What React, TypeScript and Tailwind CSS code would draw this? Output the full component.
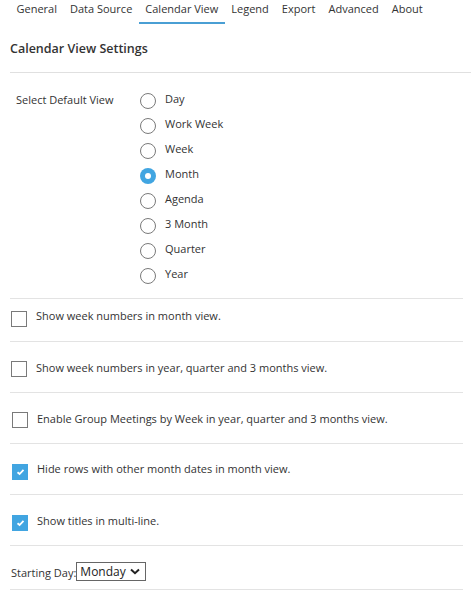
import React from "react";

const tabs = ["General", "Data Source", "Calendar View", "Legend", "Export", "Advanced", "About"];
const views = ["Day", "Work Week", "Week", "Month", "Agenda", "3 Month", "Quarter", "Year"];

function Radio({ checked }: { checked?: boolean }) {
  return checked ? (
    <span className="w-4 h-4 rounded-full bg-[#41a5e1] flex items-center justify-center shrink-0">
      <span className="w-[6px] h-[6px] rounded-full bg-white" />
    </span>
  ) : (
    <span className="w-4 h-4 rounded-full border border-[#7a7a7a] bg-white shrink-0" />
  );
}

function Check({ checked }: { checked?: boolean }) {
  return checked ? (
    <span className="w-4 h-4 bg-[#41a5e1] flex items-center justify-center shrink-0">
      <svg width="9" height="8" viewBox="0 0 9 8">
        <path d="M1.5 4.2 L3.6 6 L7.5 1.8" stroke="white" strokeWidth="1.8" fill="none" />
      </svg>
    </span>
  ) : (
    <span className="w-4 h-4 border border-[#7a7a7a] bg-white shrink-0" />
  );
}

function CheckRow({ label, checked, h, pt, pl, textOff }: { label: string; checked?: boolean; h: string; pt: string; pl: string; textOff: string }) {
  return (
    <div className={`${h} border-b border-[#e3e3e3] mr-2 flex items-start ${pt} ${pl}`}>
      <Check checked={checked} />
      <span className={`ml-[9px] ${textOff} leading-[16px]`}>{label}</span>
    </div>
  );
}

export default function App() {
  return (
    <div className="w-[471px] h-[603px] bg-white text-[#333] text-[11px]" style={{ fontFamily: '"Open Sans", sans-serif' }}>
      <div className="flex pl-[10px] h-[24px]">
        {tabs.map((t) => (
          <div
            key={t}
            className={`px-[6.5px] pt-[1px] leading-[16px] h-[24px] ${t === "Calendar View" ? "border-b-2 border-[#4a9fd4]" : ""}`}
          >
            {t}
          </div>
        ))}
      </div>
      <div className="pl-[10px]">
        <div className="h-[49px] flex items-center text-[12.5px] font-semibold text-[#333] border-b border-[#e0e0e0] pt-[3px]">
          Calendar View Settings
        </div>
        <div className="h-[226px] border-b border-[#e3e3e3] mr-2 flex pt-[20px] pl-[6px]">
          <div className="w-[124px] leading-[16px] -mt-[1px]">Select Default View</div>
          <div className="flex flex-col gap-[9px]">
            {views.map((v) => (
              <div key={v} className="flex items-start h-4">
                <Radio checked={v === "Month"} />
                <span className="ml-[9px] -mt-[2px] leading-[16px]">{v}</span>
              </div>
            ))}
          </div>
        </div>
        <CheckRow label="Show week numbers in month view." h="h-[43px]" pt="pt-[12px]" pl="pl-[1px]" textOff="-mt-[3px]" />
        <CheckRow label="Show week numbers in year, quarter and 3 months view." h="h-[51px]" pt="pt-[19px]" pl="pl-[1px]" textOff="-mt-[1px]" />
        <CheckRow label="Enable Group Meetings by Week in year, quarter and 3 months view." h="h-[51px]" pt="pt-[19px]" pl="pl-[2px]" textOff="-mt-[1px]" />
        <CheckRow label="Hide rows with other month dates in month view." checked h="h-[51px]" pt="pt-[20px]" pl="pl-[2px]" textOff="-mt-[3px]" />
        <CheckRow label="Show titles in multi-line." checked h="h-[51px]" pt="pt-[20px]" pl="pl-[2px]" textOff="-mt-[2px]" />
        <div className="h-[44px] border-b border-[#e3e3e3] mr-2 flex items-start pt-[16px] pl-[1px]">
          <span className="leading-[19px] mt-[1px]">Starting Day:</span>
          <span className="h-[19px] w-[70px] border border-[#666] flex items-center pl-[3px] pr-[5px] justify-between text-[12px] text-[#222]">
            Monday
            <svg width="10" height="7" viewBox="0 0 10 7">
              <path d="M1 1.5 L5 5.2 L9 1.5" stroke="#222" strokeWidth="2" fill="none" />
            </svg>
          </span>
        </div>
      </div>
    </div>
  );
}
